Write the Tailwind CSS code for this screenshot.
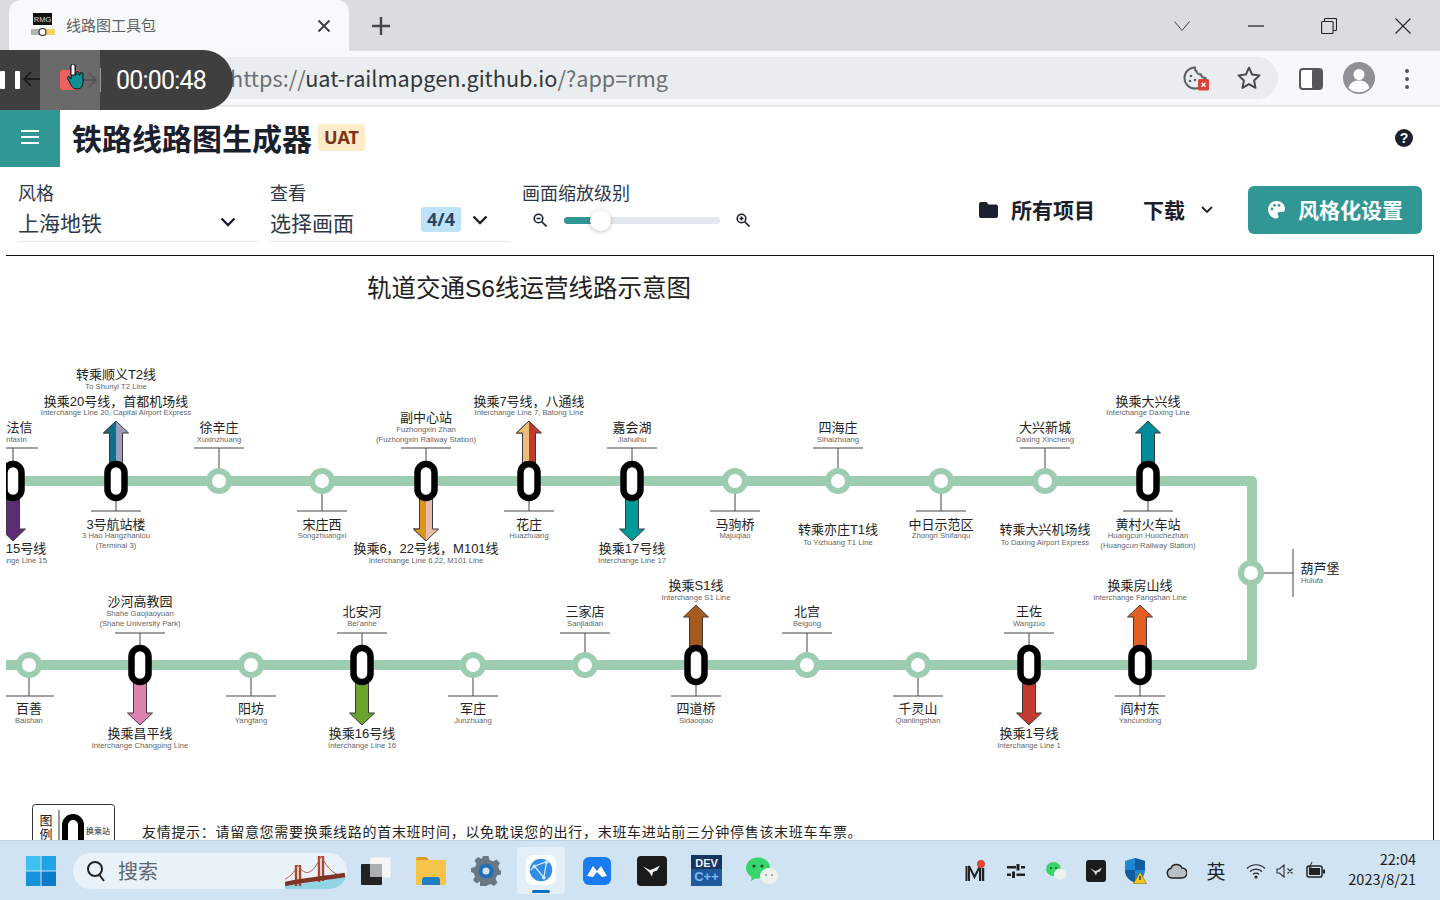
<!DOCTYPE html>
<html lang="zh-CN">
<head>
  <meta charset="UTF-8">
  <title>线路图工具包</title>
  <script src="https://cdn.jsdelivr.net/npm/@tailwindcss/browser@4"></script>
</head>
<body class="font-['Noto_Sans_CJK_SC',sans-serif] bg-white overflow-hidden">
<div class="relative w-[1440px] h-[900px] flex flex-col overflow-hidden">

  <!-- tab strip -->
  <div class="h-[51px] bg-[#dadcdf] flex items-end shrink-0">
    <div class="ml-[9px] w-[340px] h-[51px] bg-[#f7f9fb] rounded-t-[12px] flex items-center pl-[22px] pr-[18px]">
      <svg width="24" height="24" viewBox="0 0 24 24" class="shrink-0 mr-[11px] -mt-[2px]">
        <rect x="2" y="0" width="19" height="12" fill="#111"/>
        <text x="11.5" y="9" text-anchor="middle" font-size="7.5" fill="#ddd" font-family="Liberation Sans">RMG</text>
        <rect x="0" y="16" width="9" height="6" fill="#b5b5b5"/>
        <rect x="14" y="16" width="10" height="6" fill="#f0d460"/>
        <circle cx="11.5" cy="19" r="3.5" fill="#fff" stroke="#333" stroke-width="1.2"/>
      </svg>
      <span class="text-[15px] text-[#5f6368]">线路图工具包</span>
      <svg width="14" height="14" viewBox="0 0 14 14" class="ml-auto" fill="none" stroke="#3c4043" stroke-width="2"><path d="M1.5 1.5l11 11M12.5 1.5l-11 11"/></svg>
    </div>
    <div class="w-[64px] h-[51px] flex items-center justify-center">
      <svg width="20" height="20" viewBox="0 0 20 20" fill="none" stroke="#44474a" stroke-width="2.4"><path d="M10 1v18M1 10h18"/></svg>
    </div>
    <div class="ml-auto h-[51px] flex items-center text-[#222]">
      <svg width="16" height="10" viewBox="0 0 16 10" fill="none" stroke="#444" class="mr-[58px]"><path d="M.5.5L8 9.500 15.500.5"/></svg>
      <svg width="16" height="2" viewBox="0 0 16 2" class="mr-[57px]"><path d="M0 1h16" stroke="#222" stroke-width="1.200"/></svg>
      <svg width="16" height="16" viewBox="0 0 16 16" fill="none" stroke="#222" stroke-width="1.100" class="mr-[58px]"><rect x=".6" y="3.500" width="11.500" height="12" rx="1"/><path d="M3.500 3.500V1.500a1 1 0 011-1h10a1 1 0 011 1v10a1 1 0 01-1 1h-2"/></svg>
      <svg width="16" height="16" viewBox="0 0 16 16" fill="none" stroke="#222" stroke-width="1.100" class="mr-[29px]"><path d="M.5.5l15 15M15.500.5l-15 15"/></svg>
    </div>
  </div>

  <!-- browser toolbar -->
  <div class="h-[56px] bg-[#f6f8fa] border-b-2 border-[#e6e8ea] flex items-start shrink-0">
    <div class="mt-[6px] ml-[120px] w-[1158px] h-[42px] bg-[#e9edef] rounded-r-full flex items-center pl-[110px] pr-[13px]">
      <span class="text-[21.700px] text-[#6b7073]">https://<span class="text-[#33373a]">uat-railmapgen.github.io</span>/?app=rmg</span>
      <svg width="28" height="28" viewBox="0 0 28 28" class="ml-auto mr-[26px]" fill="none">
        <path d="M13 3.500a10.500 10.500 0 1010.500 10.500c-2.500 0-4-1-4.500-3.500-2.500 0-4.500-1.500-4.500-3.500-1.200 0-1.800-1.500-1.500-3.500z" stroke="#5f6368" stroke-width="2"/>
        <circle cx="9" cy="12" r="1.300" fill="#5f6368"/><circle cx="8" cy="17" r="1.300" fill="#5f6368"/><circle cx="13" cy="16" r="1.300" fill="#5f6368"/>
        <rect x="16" y="15" width="11" height="11.500" rx="1.500" fill="#d9443a"/>
        <path d="M19.500 18.700l4 4M23.500 18.700l-4 4" stroke="#fff" stroke-width="1.300"/>
      </svg>
      <svg width="26" height="26" viewBox="0 0 24 24" fill="none" stroke="#45484b" stroke-width="1.800" stroke-linejoin="round" class="mr-[3px]"><path d="M12 2.500l2.900 6.300 6.800.8-5 4.700 1.300 6.800-6-3.400-6 3.400 1.300-6.800-5-4.700 6.800-.8z"/></svg>
    </div>
    <svg width="24" height="22" viewBox="0 0 24 22" class="mt-[17px] ml-[21px]"><rect x="1" y="1" width="22" height="20" rx="3" fill="#fff" stroke="#55585b" stroke-width="2"/><rect x="13" y="1" width="10" height="20" rx="2" fill="#55585b"/></svg>
    <svg width="32" height="32" viewBox="0 0 32 32" class="mt-[11px] ml-[20px]"><circle cx="16" cy="16" r="16" fill="#8e9194"/><circle cx="16" cy="12.500" r="5.500" fill="#fff"/><path d="M5.500 26c2-6 6-7.500 10.500-7.500s8.500 1.500 10.500 7.500a15 15 0 01-21 0z" fill="#fff"/></svg>
    <svg width="6" height="22" viewBox="0 0 6 22" class="mt-[17px] ml-[29px]" fill="#55585b"><circle cx="3" cy="3" r="2"/><circle cx="3" cy="11" r="2"/><circle cx="3" cy="19" r="2"/></svg>
  </div>

  <!-- app header -->
  <div class="h-[60px] flex items-center shrink-0">
    <div class="w-[60px] h-[60px] bg-[#319795] flex items-center justify-center">
      <svg width="18" height="14" viewBox="0 0 18 14" stroke="#fff" stroke-width="2"><path d="M0 1h18M0 7h18M0 13h18"/></svg>
    </div>
    <h1 class="ml-[12px] text-[30px] leading-[40px] font-bold text-[#1a202c]">铁路线路图生成器</h1>
    <span class="ml-[6px] w-[47px] h-[27px] rounded-[3px] bg-[#feebc8] text-[#7b341e] text-[18px] font-bold flex items-center justify-center font-['Noto_Sans',sans-serif]">UAT</span>
    <svg width="18" height="18" viewBox="0 0 18 18" class="ml-auto mr-[27px] mt-[1px]"><circle cx="9" cy="9" r="9" fill="#1a202c"/><text x="9" y="14" text-anchor="middle" font-size="14" font-weight="700" fill="#fff" font-family="Liberation Sans">?</text></svg>
  </div>

  <!-- app controls -->
  <div class="h-[88px] flex shrink-0 pl-[18px] text-[#2d3748]">
    <div class="w-[240px] h-[75px] border-b border-[#e2e8f0] pt-[13px]">
      <div class="text-[18px] leading-[24px]">风格</div>
      <div class="flex items-center h-[36px]">
        <span class="text-[21px] leading-[28px]">上海地铁</span>
        <svg width="16" height="10" viewBox="0 0 16 10" class="ml-auto mr-[22px]" fill="none" stroke="#1a202c" stroke-width="2.400"><path d="M1.500 1.500L8 8l6.500-6.500"/></svg>
      </div>
    </div>
    <div class="ml-[12px] w-[240px] h-[75px] border-b border-[#e2e8f0] pt-[13px]">
      <div class="text-[18px] leading-[24px]">查看</div>
      <div class="flex items-center h-[36px]">
        <span class="text-[21px] leading-[28px]">选择画面</span>
        <span class="ml-[67px] w-[40px] h-[25px] -mt-[5px] rounded-[3px] bg-[#bee3f8] text-[#2a4365] text-[18px] font-bold flex items-center justify-center font-['Noto_Sans',sans-serif]">4/4</span>
        <svg width="16" height="10" viewBox="0 0 16 10" class="ml-[11px] -mt-[5px]" fill="none" stroke="#1a202c" stroke-width="2.400"><path d="M1.500 1.500L8 8l6.500-6.500"/></svg>
      </div>
    </div>
    <div class="ml-[12px] w-[240px] pt-[13px]">
      <div class="text-[18px] leading-[24px]">画面缩放级别</div>
      <div class="flex items-center h-[32px]">
        <svg width="14" height="14" viewBox="0 0 14 14" class="ml-[11px]" fill="none" stroke="#1a202c" stroke-width="1.600"><circle cx="5.500" cy="5.500" r="4.300"/><path d="M8.500 8.500l5 5M3.500 5.500h4"/></svg>
        <div class="relative ml-[17px] w-[156px] h-[7px] bg-[#e2e8f0] rounded-full">
          <div class="w-[36px] h-[7px] bg-[#319795] rounded-l-full"></div>
          <div class="absolute left-[26px] -top-[7px] w-[21px] h-[21px] rounded-full bg-white shadow-[0_1px_4px_rgba(0,0,0,0.25)]"></div>
        </div>
        <svg width="14" height="14" viewBox="0 0 14 14" class="ml-[16px]" fill="none" stroke="#1a202c" stroke-width="1.600"><circle cx="5.500" cy="5.500" r="4.300"/><path d="M8.500 8.500l5 5M3.500 5.500h4M5.500 3.500v4"/></svg>
      </div>
    </div>
    <div class="ml-auto mr-[18px] h-[48px] mt-[19px] flex items-center text-[#1a202c]">
      <svg width="19" height="16" viewBox="0 0 19 16" fill="#1a202c"><path d="M2 0h5.500l2 2.500H17a2 2 0 012 2V14a2 2 0 01-2 2H2a2 2 0 01-2-2V2a2 2 0 012-2z"/></svg>
      <span class="ml-[13px] text-[21px] font-bold">所有项目</span>
      <span class="ml-[48px] text-[21px] font-bold">下载</span>
      <svg width="12" height="8" viewBox="0 0 12 8" class="ml-[16px]" fill="none" stroke="#1a202c" stroke-width="1.800"><path d="M1 1l5 5 5-5"/></svg>
      <button class="ml-[35px] w-[174px] h-[48px] rounded-[6px] bg-[#319795] text-white flex items-center pl-[20px]">
        <svg width="17" height="18" viewBox="0 0 17 18"><path d="M8.500 0C3.800 0 0 3.800 0 8.500S3.800 17.500 8.500 17.500c1.500 0 2-1 2-1.900 0-1.500-1-1.500-1-2.800 0-1 .8-1.800 2-1.800h2.500c1.800 0 3-1.200 3-3C17 3.300 13.200 0 8.500 0z" fill="#fff"/><circle cx="4" cy="8" r="1.400" fill="#319795"/><circle cx="6.500" cy="4.300" r="1.400" fill="#319795"/><circle cx="11" cy="4.300" r="1.400" fill="#319795"/></svg>
        <span class="ml-[13px] text-[21px] font-bold">风格化设置</span>
      </button>
    </div>
  </div>

  <!-- canvas -->
  <div class="ml-[6px] w-[1428px] flex-1 min-h-0 border-t border-r border-[#111] overflow-hidden">
    <svg width="1427" height="584" viewBox="6 256 1427 584" class="block font-['Liberation_Sans','Noto_Sans_CJK_SC',sans-serif]" fill="none">
      <defs>
        <clipPath id="lh"><rect x="-13" y="-1" width="13" height="45"/></clipPath>
        <path id="arrow" d="M0 0L12.500 12H6.500V42H-6.500V12H-12.500Z"/>
      </defs>
      <text x="529" y="297" text-anchor="middle" font-size="24.500" fill="#222">轨道交通S6线运营线路示意图</text>

      <!-- leader lines -->
      <path stroke="#444" stroke-width="1" d="
        M13 448V481M-12 448H38 M13 481V511
        M116 481V511M91 511H141
        M219 448V481M194 448H244
        M322 481V511M297 511H347
        M426 448V481M401 448H451
        M529 481V511M504 511H554
        M632 448V481M607 448H657
        M735 481V511M710 511H760
        M838 448V481M813 448H863
        M941 481V511M916 511H966
        M1045 448V481M1020 448H1070
        M1148 481V511M1123 511H1173
        M1252 573H1293M1293 549V597
        M29 665V696M4 696H54
        M140 633V665M115 633H165
        M251 665V696M226 696H276
        M362 633V665M337 633H387
        M473 665V696M448 696H498
        M585 633V665M560 633H610
        M696 665V696M671 696H721
        M807 633V665M782 633H832
        M918 665V696M893 696H943
        M1029 633V665M1004 633H1054
        M1140 665V696M1115 696H1165"/>

      <!-- interchange arrows -->
      <g stroke="#3a3a3a" stroke-width="1">
        <g transform="translate(13 541) scale(1 -1)"><use href="#arrow" fill="#5c2d73"/></g>
        <g transform="translate(116 421)"><use href="#arrow" fill="#9a9cc0"/><g clip-path="url(#lh)"><use href="#arrow" fill="#0f6f86"/></g></g>
        <g transform="translate(426 541) scale(1 -1)"><use href="#arrow" fill="#e9bba9"/><g clip-path="url(#lh)"><use href="#arrow" fill="#d9961f"/></g></g>
        <g transform="translate(529 421)"><use href="#arrow" fill="#c0392b"/><g clip-path="url(#lh)"><use href="#arrow" fill="#f0bd78"/></g></g>
        <g transform="translate(632 541) scale(1 -1)"><use href="#arrow" fill="#009b96"/></g>
        <g transform="translate(1148 421)"><use href="#arrow" fill="#008b9a"/></g>
        <g transform="translate(140 725) scale(1 -1)"><use href="#arrow" fill="#de82b2"/></g>
        <g transform="translate(362 725) scale(1 -1)"><use href="#arrow" fill="#6ba32d"/></g>
        <g transform="translate(696 605)"><use href="#arrow" fill="#a65a1d"/></g>
        <g transform="translate(1029 725) scale(1 -1)"><use href="#arrow" fill="#c23a30"/></g>
        <g transform="translate(1140 605)"><use href="#arrow" fill="#e46022"/></g>
      </g>

      <!-- the line -->
      <path d="M0 481H1252V665H0" stroke="#9ccdb0" stroke-width="10" stroke-linejoin="round"/>

      <!-- plain stations -->
      <g fill="#fff" stroke="#9ccdb0" stroke-width="6">
        <circle cx="219" cy="481" r="10"/><circle cx="322" cy="481" r="10"/><circle cx="735" cy="481" r="10"/>
        <circle cx="838" cy="481" r="10"/><circle cx="941" cy="481" r="10"/><circle cx="1045" cy="481" r="10"/>
        <circle cx="1251" cy="573" r="10"/>
        <circle cx="29" cy="665" r="10"/><circle cx="251" cy="665" r="10"/><circle cx="473" cy="665" r="10"/>
        <circle cx="585" cy="665" r="10"/><circle cx="807" cy="665" r="10"/><circle cx="918" cy="665" r="10"/>
      </g>

      <!-- interchange stations -->
      <g fill="#fff" stroke="#000" stroke-width="6.500">
        <rect x="4.500" y="464" width="17" height="34" rx="8.500"/>
        <rect x="107.500" y="464" width="17" height="34" rx="8.500"/>
        <rect x="417.500" y="464" width="17" height="34" rx="8.500"/>
        <rect x="520.500" y="464" width="17" height="34" rx="8.500"/>
        <rect x="623.500" y="464" width="17" height="34" rx="8.500"/>
        <rect x="1139.500" y="464" width="17" height="34" rx="8.500"/>
        <rect x="131.500" y="648" width="17" height="34" rx="8.500"/>
        <rect x="353.500" y="648" width="17" height="34" rx="8.500"/>
        <rect x="687.500" y="648" width="17" height="34" rx="8.500"/>
        <rect x="1020.500" y="648" width="17" height="34" rx="8.500"/>
        <rect x="1131.500" y="648" width="17" height="34" rx="8.500"/>
      </g>

      <!-- station names -->
      <g fill="#222" font-size="13" text-anchor="middle">
        <text x="116" y="379">转乘顺义T2线</text>
        <text x="116" y="406">换乘20号线，首都机场线</text>
        <text x="13" y="432">新法信</text>
        <text x="13" y="553">换乘15号线</text>
        <text x="116" y="529">3号航站楼</text>
        <text x="219" y="432">徐辛庄</text>
        <text x="322" y="529">宋庄西</text>
        <text x="426" y="422">副中心站</text>
        <text x="426" y="553">换乘6，22号线，M101线</text>
        <text x="529" y="406">换乘7号线，八通线</text>
        <text x="529" y="529">花庄</text>
        <text x="632" y="432">嘉会湖</text>
        <text x="632" y="553">换乘17号线</text>
        <text x="735" y="529">马驹桥</text>
        <text x="838" y="432">四海庄</text>
        <text x="838" y="534">转乘亦庄T1线</text>
        <text x="941" y="529">中日示范区</text>
        <text x="1045" y="432">大兴新城</text>
        <text x="1045" y="534">转乘大兴机场线</text>
        <text x="1148" y="406">换乘大兴线</text>
        <text x="1148" y="529">黄村火车站</text>
        <text x="1320" y="573">葫芦堡</text>
        <text x="29" y="713">百善</text>
        <text x="140" y="606">沙河高教园</text>
        <text x="140" y="738">换乘昌平线</text>
        <text x="251" y="713">阳坊</text>
        <text x="362" y="616">北安河</text>
        <text x="362" y="738">换乘16号线</text>
        <text x="473" y="713">军庄</text>
        <text x="585" y="616">三家店</text>
        <text x="696" y="590">换乘S1线</text>
        <text x="696" y="713">四道桥</text>
        <text x="807" y="616">北宫</text>
        <text x="918" y="713">千灵山</text>
        <text x="1029" y="616">王佐</text>
        <text x="1029" y="738">换乘1号线</text>
        <text x="1140" y="590">换乘房山线</text>
        <text x="1140" y="713">阎村东</text>
      </g>
      <g fill="#666" font-size="7.700" text-anchor="middle">
        <text x="116" y="389">To Shunyi T2 Line</text>
        <text x="116" y="415">Interchange Line 20, Capital Airport Express</text>
        <text x="13" y="442">Xinfaxin</text>
        <text x="13" y="563">Interchange Line 15</text>
        <text x="116" y="538">3 Hao Hangzhanlou</text>
        <text x="116" y="548">(Terminal 3)</text>
        <text x="219" y="442">Xuxinzhuang</text>
        <text x="322" y="538">Songzhuangxi</text>
        <text x="426" y="432">Fuzhongxin Zhan</text>
        <text x="426" y="442">(Fuzhongxin Railway Station)</text>
        <text x="426" y="563">Interchange Line 6,22, M101 Line</text>
        <text x="529" y="415">Interchange Line 7, Batong Line</text>
        <text x="529" y="538">Huazhuang</text>
        <text x="632" y="442">Jiahuihu</text>
        <text x="632" y="563">Interchange Line 17</text>
        <text x="735" y="538">Majuqiao</text>
        <text x="838" y="442">Sihaizhuang</text>
        <text x="838" y="545">To Yizhuang T1 Line</text>
        <text x="941" y="538">Zhongri Shifanqu</text>
        <text x="1045" y="442">Daxing Xincheng</text>
        <text x="1045" y="545">To Daxing Airport Express</text>
        <text x="1148" y="415">Interchange Daxing Line</text>
        <text x="1148" y="538">Huangcun Huochezhan</text>
        <text x="1148" y="548">(Huangcun Railway Station)</text>
        <text x="1312" y="583">Hulufa</text>
        <text x="29" y="723">Baishan</text>
        <text x="140" y="616">Shahe Gaojiaoyuan</text>
        <text x="140" y="626">(Shahe University Park)</text>
        <text x="140" y="748">Interchange Changping Line</text>
        <text x="251" y="723">Yangfang</text>
        <text x="362" y="626">Bei'anhe</text>
        <text x="362" y="748">Interchange Line 16</text>
        <text x="473" y="723">Junzhuang</text>
        <text x="585" y="626">Sanjiadian</text>
        <text x="696" y="600">Interchange S1 Line</text>
        <text x="696" y="723">Sidaoqiao</text>
        <text x="807" y="626">Beigong</text>
        <text x="918" y="723">Qianlingshan</text>
        <text x="1029" y="626">Wangzuo</text>
        <text x="1029" y="748">Interchange Line 1</text>
        <text x="1140" y="600">Interchange Fangshan Line</text>
        <text x="1140" y="723">Yancundong</text>
      </g>

      <!-- legend -->
      <rect x="32.500" y="804.500" width="82" height="50" rx="3" stroke="#333"/>
      <path d="M59 810V850" stroke="#333"/>
      <rect x="65" y="817" width="16" height="30" rx="8" fill="#fff" stroke="#000" stroke-width="6"/>
      <text x="46" y="825" text-anchor="middle" font-size="13" fill="#222">图</text>
      <text x="46" y="839" text-anchor="middle" font-size="13" fill="#222">例</text>
      <text x="98" y="834" text-anchor="middle" font-size="8" fill="#222">换乘站</text>
      <text x="142" y="837" font-size="14" letter-spacing="0.700" fill="#222">友情提示：请留意您需要换乘线路的首末班时间，以免耽误您的出行，末班车进站前三分钟停售该末班车车票。</text>
    </svg>
  </div>

  <!-- windows taskbar -->
  <div class="h-[60px] bg-[#cfe3f3] border-t border-[#bcd0df] flex items-center shrink-0">
    <svg width="30" height="30" viewBox="0 0 30 30" class="ml-[26px] shrink-0">
      <rect width="14.500" height="14.500" fill="#3cc1f2"/><rect x="15.500" width="14.500" height="14.500" fill="#1fa4e8"/>
      <rect y="15.500" width="14.500" height="14.500" fill="#1793dd"/><rect x="15.500" y="15.500" width="14.500" height="14.500" fill="#0a7cc9"/>
    </svg>
    <div class="ml-[17px] w-[274px] h-[36px] rounded-full bg-[#eaf2f9] flex items-center pl-[13px] relative overflow-hidden shrink-0">
      <svg width="20" height="22" viewBox="0 0 20 22" fill="none" stroke="#222" stroke-width="2"><circle cx="9" cy="9" r="7"/><path d="M13.500 15l4.500 6"/></svg>
      <span class="ml-[12px] text-[20px] text-[#5c6670]">搜索</span>
      <svg width="62" height="36" viewBox="0 0 62 36" class="ml-auto" fill="none">
        <path d="M0 33L62 24V36H0z" fill="#8fd5e4"/>
        <path d="M11 33V12M15 33V12M34 29V3M38 28V3" stroke="#a8452f" stroke-width="2.400"/>
        <path d="M0 26C7 23 10 17 13 12C20 24 28 22 36 3C43 17 50 22 60 24" stroke="#b65a42" stroke-width="1"/>
        <path d="M0 31C20 27 40 25 60 22" stroke="#7f3427" stroke-width="4.500"/>
      </svg>
    </div>
    <!-- pinned apps -->
    <div class="flex items-center shrink-0 ml-[1px]">
      <div class="w-[55px] h-[48px] flex items-center justify-center">
        <svg width="30" height="28" viewBox="0 0 30 28"><rect x="9" width="21" height="21" fill="#f4f6f7"/><rect x="9" width="21" height="21" fill="none" stroke="#dfe4e8"/><rect y="7" width="21" height="21" rx="1" fill="#232323"/><rect x="9" y="7" width="12" height="13" fill="#a9aeb3"/></svg>
      </div>
      <div class="w-[55px] h-[48px] flex items-center justify-center">
        <svg width="30" height="28" viewBox="0 0 30 28"><path d="M0 2a2 2 0 012-2h8l3 3h15a2 2 0 012 2v21a2 2 0 01-2 2H2a2 2 0 01-2-2z" fill="#f7c44b"/><path d="M0 2a2 2 0 012-2h8l3 3h-13z" fill="#d99f2b"/><path d="M6 28v-5a3 3 0 013-3h12a3 3 0 013 3v5z" fill="#1e7fc4"/></svg>
      </div>
      <div class="w-[55px] h-[48px] flex items-center justify-center">
        <svg width="30" height="30" viewBox="0 0 30 30"><path d="M12.500 0h5l1 4 3.500 1.500 3.500-2 3.500 3.500-2 3.500 1.500 3.500 1.500.5v4l-4 1-1.500 3.500 2 3.500-3.500 3.500-3.500-2-3.500 1.500-1 3.500h-5l-1-3.500L9 25.500l-3.500 2L2 24l2-3.500L2.500 17l-2.500-1v-4l4-1L5.500 8l-2-3.500L7 1l3.500 2L11.500 1z" fill="#6a7884"/><circle cx="15" cy="15" r="7.500" fill="#1f6fb5"/><circle cx="15" cy="15" r="3.500" fill="#cfe3f3"/></svg>
      </div>
      <div class="w-[48px] h-[47px] mx-[4px] rounded-[4px] bg-[#e4eff8] flex flex-col items-center relative">
        <svg width="30" height="30" viewBox="0 0 32 32" class="mt-[8px]"><rect width="32" height="32" rx="7" fill="#fff"/><circle cx="16" cy="16" r="12" fill="#2f8de4"/><path d="M9 12L22 7 19 24zM9 12L5 16" stroke="#cfe6fb" stroke-width="1.400" fill="none"/><circle cx="9" cy="12" r="2" fill="#cfe6fb"/><circle cx="22" cy="7.500" r="2" fill="#cfe6fb"/><circle cx="19" cy="24" r="2" fill="#cfe6fb"/></svg>
        <div class="absolute bottom-[1px] w-[18px] h-[3px] rounded-full bg-[#0b6fc4]"></div>
      </div>
      <div class="w-[55px] h-[48px] flex items-center justify-center">
        <svg width="28" height="28" viewBox="0 0 28 28"><rect width="28" height="28" rx="6" fill="#1a7cf0"/><path d="M4 19L10 9l4 5 4-5 6 10-5 1-5-5-4 5z" fill="#fff"/></svg>
      </div>
      <div class="w-[55px] h-[48px] flex items-center justify-center">
        <svg width="30" height="30" viewBox="0 0 30 30"><rect width="30" height="30" rx="4" fill="#1b1b1b"/><path d="M6 10.500l7 3.500 3-1 7-3.500-3 5-4 1.500-1 4.500-2.500-4z" fill="#f2f2f2"/></svg>
      </div>
      <div class="w-[55px] h-[48px] flex items-center justify-center">
        <svg width="31" height="31" viewBox="0 0 31 31"><rect width="31" height="31" fill="#17365f"/><rect y="14" width="31" height="17" fill="#1f5a9c"/><text x="15.500" y="12" text-anchor="middle" font-size="11" font-weight="700" fill="#eef" font-family="Liberation Sans">DEV</text><text x="15.500" y="26" text-anchor="middle" font-size="13" font-weight="700" fill="#7fbdf5" font-family="Liberation Sans">C++</text></svg>
      </div>
      <div class="w-[55px] h-[48px] flex items-center justify-center">
        <svg width="32" height="28" viewBox="0 0 32 28"><ellipse cx="12" cy="11" rx="12" ry="10.500" fill="#38d56d"/><path d="M6 18l-1 6 7-4z" fill="#38d56d"/><circle cx="8" cy="9" r="1.600" fill="#14532d"/><circle cx="16" cy="9" r="1.600" fill="#14532d"/><ellipse cx="23" cy="19" rx="9" ry="8" fill="#eef2ef"/><circle cx="20" cy="18" r="1.100" fill="#999"/><circle cx="26" cy="18" r="1.100" fill="#999"/></svg>
      </div>
    </div>
    <!-- tray -->
    <div class="ml-auto flex items-center text-[#222] shrink-0">
      <div class="w-[40px] flex justify-center">
        <svg width="22" height="24" viewBox="0 0 22 24"><path d="M1.500 7v15M4 22V7l5.500 11L15 7v15" fill="none" stroke="#222" stroke-width="2"/><path d="M18 22V9" stroke="#222" stroke-width="2.500"/><circle cx="16" cy="5" r="4" fill="#e0463a"/></svg>
      </div>
      <div class="w-[40px] flex justify-center">
        <svg width="18" height="14" viewBox="0 0 18 14" fill="#222"><rect y="2" width="9" height="2.500"/><rect x="9.500" width="3" height="6.500"/><rect x="14" y="2" width="4" height="2.500"/><rect y="9.500" width="4" height="2.500"/><rect x="5" y="7.500" width="3" height="6.500"/><rect x="9.500" y="9.500" width="8.500" height="2.500"/></svg>
      </div>
      <div class="w-[40px] flex justify-center">
        <svg width="20" height="18" viewBox="0 0 20 18"><ellipse cx="7.500" cy="7" rx="7.500" ry="7" fill="#38d56d"/><ellipse cx="14" cy="12" rx="6" ry="5.500" fill="#eef2ef"/><circle cx="5" cy="6" r="1" fill="#14532d"/><circle cx="10" cy="6" r="1" fill="#14532d"/></svg>
      </div>
      <div class="w-[40px] flex justify-center">
        <svg width="20" height="22" viewBox="0 0 20 22"><rect width="20" height="22" rx="3" fill="#1b1b1b"/><path d="M4 8l5 3 2-.5 5-3-2 4-3 1-1 3-2-3.500z" fill="#ddd"/></svg>
      </div>
      <div class="w-[40px] flex justify-center">
        <svg width="22" height="26" viewBox="0 0 22 26"><path d="M10 0l10 3v9c0 6-4 10-10 13C4 22 0 18 0 12V3z" fill="#1f86d1"/><path d="M10 0l10 3v9H10zM0 12h10v13C4 22 0 18 0 12z" fill="#0f5d9e"/><path d="M15 14l6.500 11.500h-13z" fill="#f5c518" stroke="#7a6200" stroke-width=".5"/><path d="M15 18v4" stroke="#222" stroke-width="1.300"/></svg>
      </div>
      <div class="w-[40px] flex justify-center">
        <svg width="21" height="16" viewBox="0 0 21 16"><path d="M6 15a5 5 0 01-1-9.800 6 6 0 0111-.2 5 5 0 010 10z" fill="#b8c0c7" stroke="#222" stroke-width="1.500"/></svg>
      </div>
      <div class="w-[40px] text-center text-[19px] leading-[24px]">英</div>
      <div class="w-[40px] flex justify-center">
        <svg width="20" height="16" viewBox="0 0 20 16" fill="none" stroke="#222" stroke-width="1.200"><path d="M1 5.500c5-5 13-5 18 0M4 8.500c3.500-3.300 8.500-3.300 12 0M7 11.500c1.700-1.500 4.300-1.500 6 0"/><circle cx="10" cy="14" r="1" fill="#222"/></svg>
      </div>
      <div class="w-[18px] flex justify-center">
        <svg width="18" height="14" viewBox="0 0 18 14" fill="none" stroke="#333" stroke-width="1.100"><path d="M1 5v4h2.500L8 13V1L3.500 5zM11.500 4.500l5 5M16.500 4.500l-5 5"/></svg>
      </div>
      <div class="w-[44px] flex justify-center">
        <svg width="20" height="18" viewBox="0 0 20 18"><rect x="1" y="4" width="15" height="11" rx="2" fill="#cfe3f3" stroke="#222" stroke-width="1.500"/><rect x="3" y="6" width="11" height="7" fill="#222"/><rect x="17" y="7.500" width="2" height="4" fill="#222"/><path d="M6 0L3 6h3l-1 4" stroke="#222" fill="none"/></svg>
      </div>
      <div class="w-[78px] mr-[24px] -mt-[4px] text-right text-[14.500px] leading-[20px] text-[#222]">
        <div>22:04</div>
        <div>2023/8/21</div>
      </div>
    </div>
  </div>

  <!-- screen recorder bar, floats over the browser -->
  <div class="absolute left-0 top-[50px] w-[233px] h-[60px] rounded-r-[30px] bg-[#3f3f3f] overflow-hidden">
    <div class="absolute left-0 top-[21px] w-[5px] h-[18px] rounded-[1px] bg-white"></div>
    <div class="absolute left-[15px] top-[21px] w-[5px] h-[18px] rounded-[1px] bg-white"></div>
    <svg width="20" height="18" viewBox="0 0 20 18" class="absolute left-[22px] top-[20px]" fill="none" stroke="#1d1d1d" stroke-width="1.800"><path d="M20 9H2M9 2L2 9l7 7"/></svg>
    <div class="absolute left-[40px] top-0 w-[60px] h-[60px] bg-[#6a6a6a]"></div>
    <div class="absolute left-[60px] top-[20px] w-[20px] h-[20px] rounded-[3px] bg-[#ef5f5f]"></div>
    <svg width="18" height="18" viewBox="0 0 18 18" class="absolute left-[80px] top-[21px]" fill="none" stroke="#555" stroke-width="1.800"><path d="M-2 9h18M9 2l7 7-7 7"/></svg>
    <svg width="20" height="27" viewBox="0 0 20 27" class="absolute left-[66px] top-[14px]"><path d="M5 2a2 2 0 014 0v9h1V9a1.500 1.500 0 013 0v2h1v-1a1.500 1.500 0 013 0v8c0 4-2 7-6 7s-5-2-7-6l-2.500-4.500c-.8-1.500 1-2.500 2-1.500L5 15z" fill="#0f8f92" stroke="#111" stroke-width="1"/><path d="M5 2a2 2 0 014 0v9H5z" fill="#fff" stroke="#111" stroke-width="1"/></svg>
    <div class="absolute left-[100px] top-[18px] w-px h-[24px] bg-[#999]"></div>
    <span class="absolute left-[116px] top-[13px] text-[25px] leading-[36px] tracking-[-0.800px] text-white font-['Roboto',sans-serif]">00:00:48</span>
  </div>
</div>
</body>
</html>
